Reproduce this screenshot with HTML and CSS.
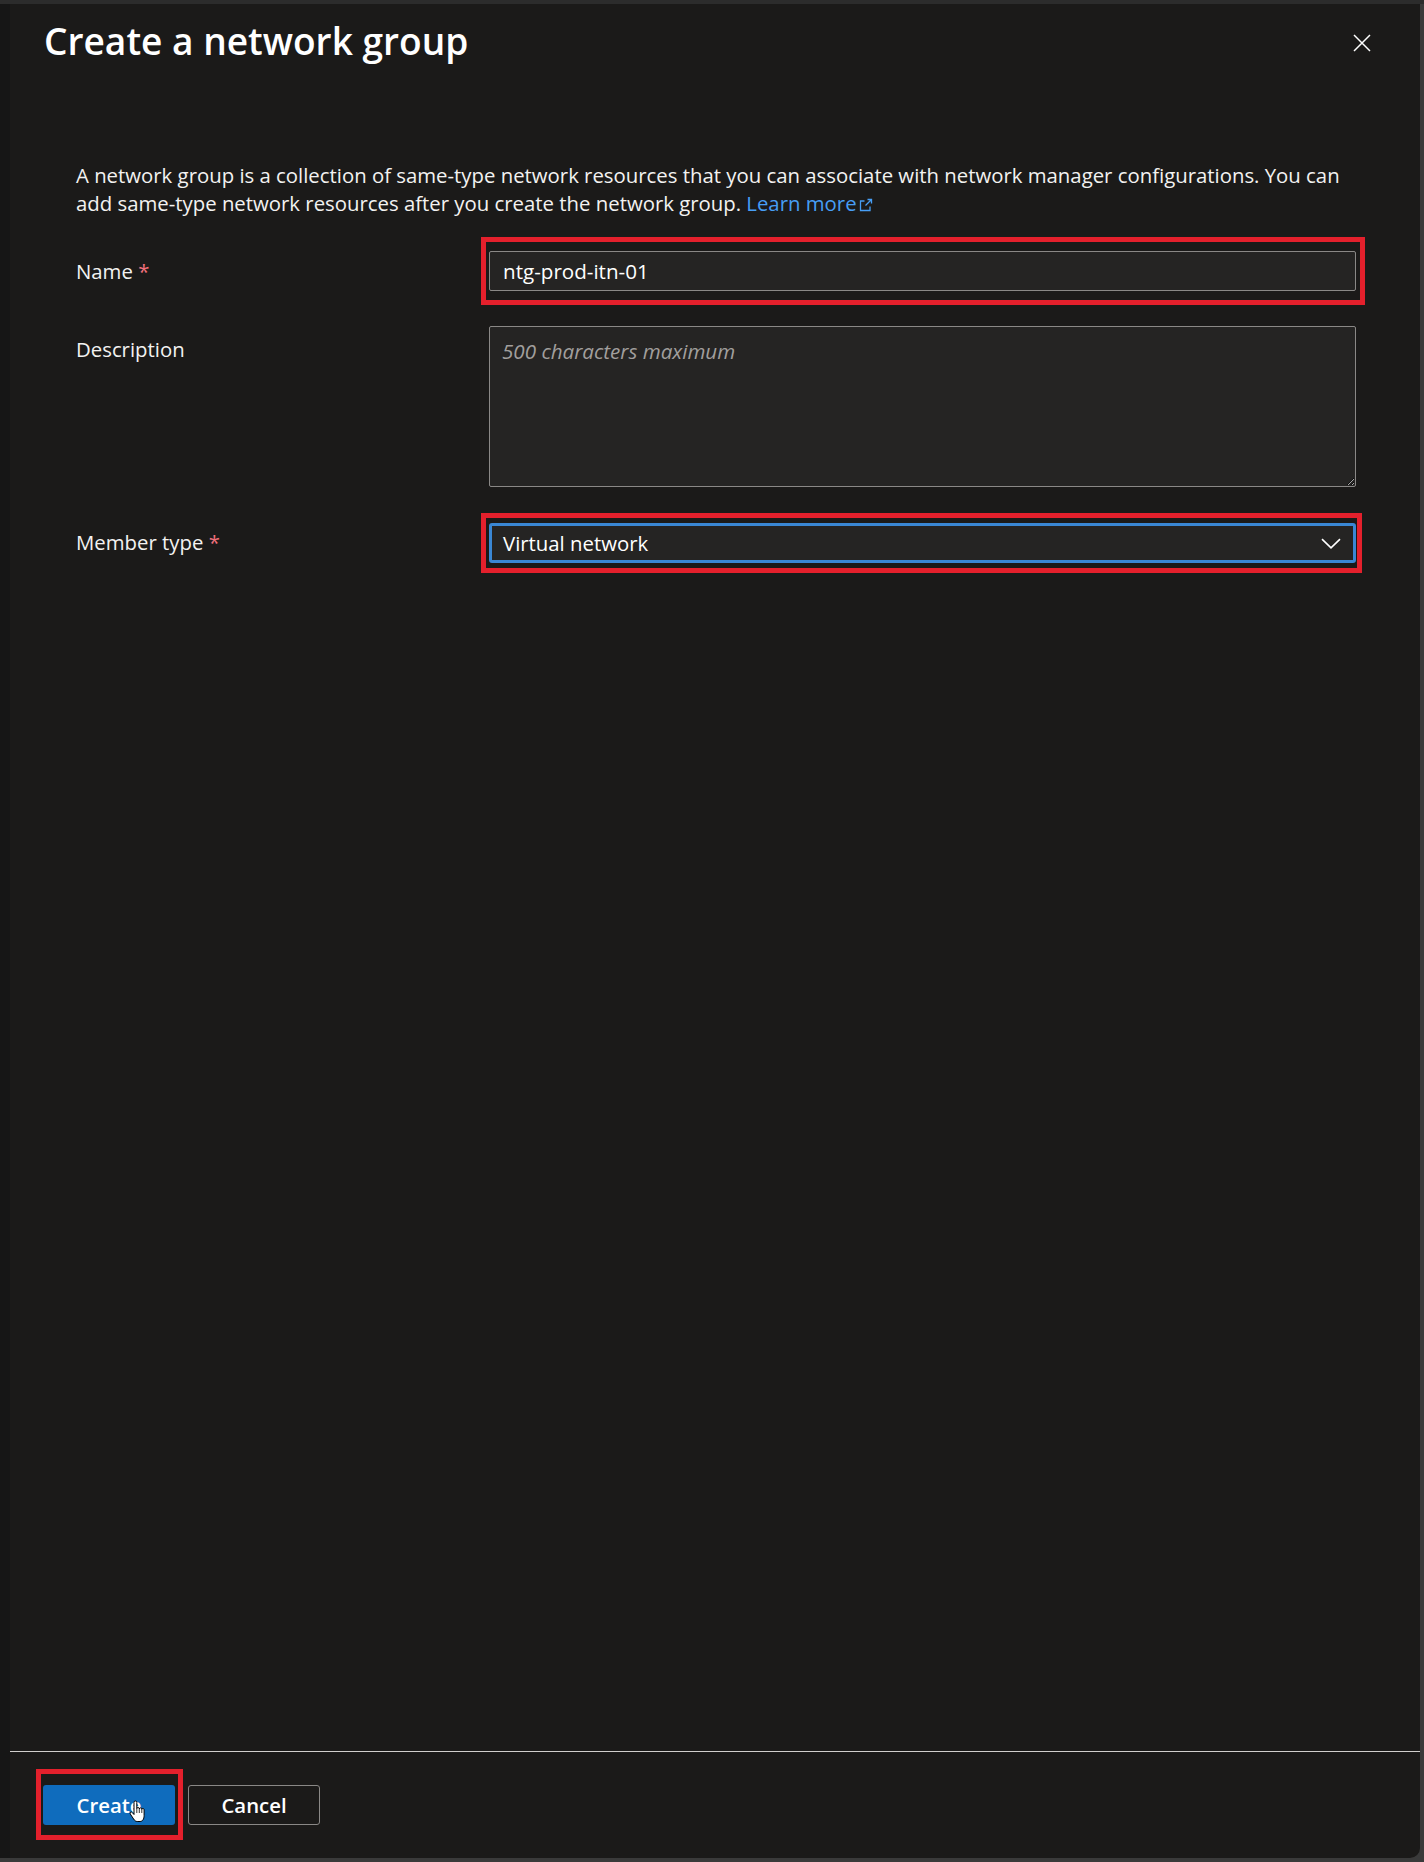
FILE: index.html
```html
<!DOCTYPE html>
<html lang="en">
<head>
<meta charset="utf-8">
<title>Create a network group</title>
<link rel="stylesheet" href="styles.css">
</head>
<body>
<div class="screen">
  <div class="panel">
    <header class="header">
      <h1 class="title">Create a network group</h1>
      <button class="close" aria-label="Close">
        <svg width="18" height="18" viewBox="0 0 18 18"><path d="M1 1L17 17M17 1L1 17" stroke="#ffffff" stroke-width="1.5" fill="none"/></svg>
      </button>
    </header>

    <main class="content">
      <p class="intro">A network group is a collection of same-type network resources that you can associate with network manager configurations. You can<br>add same-type network resources after you create the network group. <a class="link" href="#">Learn more<svg class="ext" width="14" height="14" viewBox="0 0 14 14"><path d="M8.5 1.5h4v4M12.5 1.5L6.5 7.5M11 8.5v4H1.5V3h4" stroke="currentColor" stroke-width="1.3" fill="none"/></svg></a></p>

      <div class="form">
        <label class="label">Name <span class="req">*</span></label>
        <div class="field">
          <input class="input" type="text" value="ntg-prod-itn-01">
          <span class="mark mark-name"></span>
        </div>

        <label class="label label-top">Description</label>
        <div class="field">
          <textarea class="textarea" placeholder="500 characters maximum"></textarea>
        </div>

        <label class="label">Member type <span class="req">*</span></label>
        <div class="field">
          <div class="select">
            <span>Virtual network</span>
            <svg width="20" height="11" viewBox="0 0 20 11"><path d="M1 1.2L10 9.8L19 1.2" stroke="#ffffff" stroke-width="1.6" fill="none"/></svg>
          </div>
          <span class="mark mark-type"></span>
        </div>
      </div>
    </main>

    <footer class="footer">
      <div class="btn-wrap">
        <button class="btn btn-primary">Create</button>
        <span class="mark mark-create"></span>
        <svg class="cursor" width="17" height="23" viewBox="0 0 17 23"><path d="M5 11V2.4A1.4 1.4 0 0 1 7.8 2.4V8.6A1.25 1.25 0 0 1 10.3 8.9A1.25 1.25 0 0 1 12.8 9.4A1.15 1.15 0 0 1 15.1 10V15.5C15.1 19 13.6 21.5 11 21.5H8.2C6.7 21.5 5.6 20.6 4.6 19L1.3 14A1.2 1.2 0 0 1 3.3 12.6L5 14.5Z" fill="#ffffff" stroke="#000000" stroke-width="1"/><path d="M7.8 8.6V13M10.3 8.9V13M12.8 9.4V13" stroke="#000" stroke-width="0.8"/></svg>
      </div>
      <button class="btn btn-secondary">Cancel</button>
    </footer>
  </div>
</div>
</body>
</html>
```

FILE: styles.css
```css
* { box-sizing: border-box; }

html, body {
  margin: 0;
  padding: 0;
}

body {
  background: #383838;
  font-family: "Open Sans", "Noto Sans", "Liberation Sans", sans-serif;
  color: #f3f2f1;
}

.screen {
  width: 1424px;
  height: 1862px;
  padding: 4px 4px 4px 0;
  background: linear-gradient(#2c2c2c 0 4px, #3a3a3a 4px);
}

.panel {
  height: 100%;
  background: #1b1a19;
  border-left: 10px solid #161616;
  border-bottom-right-radius: 10px;
  display: flex;
  flex-direction: column;
}

.header {
  display: flex;
  justify-content: space-between;
  align-items: center;
  padding: 13px 49px 0 34px;
}

.title {
  margin: 0;
  font-size: 37.1px;
  line-height: 48px;
  font-weight: 600;
  color: #ffffff;
}

.close {
  width: 18px;
  height: 18px;
  padding: 0;
  margin-top: 4px;
  border: 0;
  background: none;
  display: flex;
}

.content {
  padding: 0 0 0 66px;
}

.intro {
  margin: 96px 0 0;
  font-size: 20.35px;
  line-height: 28px;
  color: #f3f2f1;
  white-space: nowrap;
}

.link {
  color: #479ef5;
  text-decoration: none;
}

.ext {
  margin-left: 2px;
  vertical-align: -1px;
}

.form {
  display: grid;
  grid-template-columns: 413px 867px;
  row-gap: 35px;
  margin-top: 34px;
}

.label {
  font-size: 20.35px;
  line-height: 40px;
  color: #f3f2f1;
}

.label-top {
  padding-top: 3px;
}

.req {
  color: #f1707b;
}

.field {
  position: relative;
}

.input {
  display: block;
  width: 100%;
  height: 40px;
  border: 1px solid #8a8886;
  border-radius: 2px;
  background: #252423;
  color: #ffffff;
  padding: 0 13px;
  font-family: inherit;
  font-size: 20.6px;
  outline: none;
}

.textarea {
  display: block;
  width: 100%;
  height: 161px;
  border: 1px solid #8a8886;
  border-radius: 2px;
  background: #252423;
  color: #ffffff;
  padding: 11px 12px;
  font-family: inherit;
  font-size: 20.6px;
  line-height: 26px;
  color-scheme: dark;
  resize: vertical;
  outline: none;
}

.textarea::placeholder {
  color: #a19f9d;
  font-style: italic;
}

.select {
  height: 40px;
  margin-top: 1px;
  border: 3px solid #3a87d4;
  border-radius: 3px;
  background: #252423;
  color: #ffffff;
  padding: 0 12px 0 11px;
  display: flex;
  align-items: center;
  justify-content: space-between;
  font-size: 20.35px;
}

.mark {
  position: absolute;
  border: 5px solid #e4202c;
  pointer-events: none;
}

.mark-name {
  left: -8px;
  right: -9px;
  top: -14px;
  bottom: -14px;
}

.mark-type {
  left: -8px;
  right: -6px;
  top: -9px;
  bottom: -10px;
}

.footer {
  margin-top: auto;
  border-top: 1px solid #d2d0ce;
  padding: 33px 0 33px 33px;
  display: flex;
  gap: 13px;
}

.btn-wrap {
  position: relative;
}

.btn {
  width: 132px;
  height: 40px;
  border-radius: 3px;
  font-family: inherit;
  font-size: 20.35px;
  font-weight: 600;
  color: #ffffff;
  padding: 0;
}

.btn-primary {
  background: #0f6cbd;
  border: 0;
}

.btn-secondary {
  background: transparent;
  border: 1px solid #8a8886;
}

.mark-create {
  left: -7px;
  right: -8px;
  top: -16px;
  bottom: -15px;
}

.cursor {
  position: absolute;
  left: 86px;
  top: 15px;
}
```
